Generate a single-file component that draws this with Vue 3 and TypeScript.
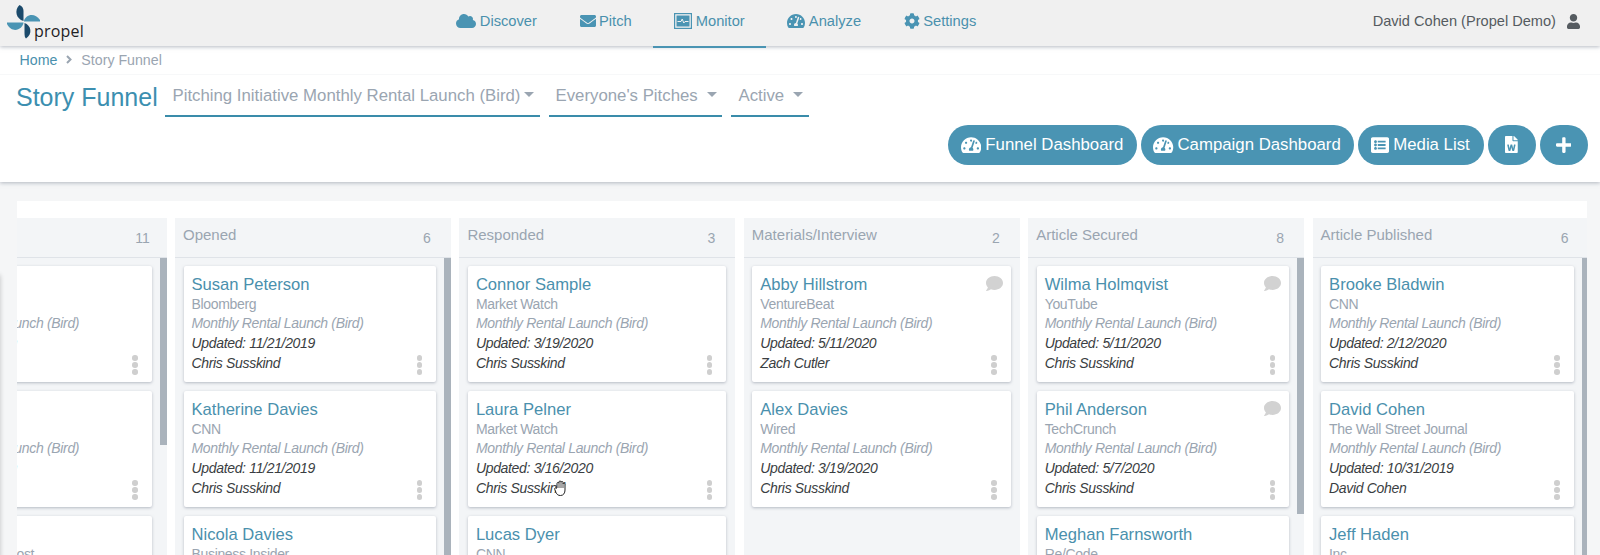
<script setup lang="ts">
interface Card { name: string; outlet: string; campaign: string; updated: string; owner: string; note?: boolean }
interface Column { title: string; count: number; thumb: 'none' | 'short' | 'mid' | 'full'; cards: Card[] }

const CAMPAIGN = 'Monthly Rental Launch (Bird)'
const card = (name: string, outlet: string, updated: string, owner = 'Chris Susskind', note = false): Card => ({
  name, outlet, campaign: CAMPAIGN, updated, owner, note,
})

const navItems = ['Discover', 'Pitch', 'Monitor', 'Analyze', 'Settings']
const paths: Record<string, { vb: string; d: string }> = {
  Discover: { vb: '0 0 640 512', d: 'M537.6 226.6c4.1-10.7 6.4-22.4 6.4-34.6 0-53-43-96-96-96-19.7 0-38.1 6-53.3 16.2C367 64.2 315.3 32 256 32c-88.4 0-160 71.6-160 160 0 2.7.1 5.4.2 8.1C40.2 219.8 0 273.2 0 336c0 79.5 64.5 144 144 144h368c70.7 0 128-57.3 128-128 0-61.9-44-113.6-102.4-125.4z' },
  Pitch: { vb: '0 0 512 512', d: 'M502.3 190.8c3.9-3.1 9.7-.2 9.7 4.7V400c0 26.5-21.5 48-48 48H48c-26.5 0-48-21.5-48-48V195.6c0-5 5.7-7.8 9.7-4.7 22.4 17.4 52.1 39.5 154.1 113.6 21.1 15.4 56.7 47.8 92.2 47.6 35.7.3 72-32.8 92.3-47.6 102-74.1 131.6-96.3 154-113.7zM256 320c23.2.4 56.6-29.2 73.4-41.4 132.7-96.3 142.8-104.7 173.4-128.7 5.8-4.5 9.2-11.5 9.2-18.9v-19c0-26.5-21.5-48-48-48H48C21.5 64 0 85.5 0 112v19c0 7.4 3.4 14.3 9.2 18.9 30.6 23.9 40.7 32.4 173.4 128.7 16.8 12.2 50.2 41.8 73.4 41.4z' },
  Analyze: { vb: '0 0 576 512', d: 'M288 32C128.94 32 0 160.94 0 320c0 52.8 14.25 102.26 39.06 144.8 5.61 9.62 16.3 15.2 27.44 15.2h443c11.14 0 21.83-5.58 27.44-15.2C561.75 422.26 576 372.8 576 320c0-159.06-128.94-288-288-288zm0 64c14.71 0 26.58 10.13 30.32 23.65-1.11 2.26-2.64 4.23-3.45 6.67l-9.22 27.67c-5.13 3.49-10.97 6.01-17.64 6.01-17.67 0-32-14.33-32-32S270.33 96 288 96zM96 384c-17.67 0-32-14.33-32-32s14.33-32 32-32 32 14.33 32 32-14.33 32-32 32zm48-160c-17.67 0-32-14.33-32-32s14.33-32 32-32 32 14.33 32 32-14.33 32-32 32zm246.77-72.41l-61.33 184C343.13 347.33 352 364.54 352 384c0 11.72-3.38 22.55-8.88 32H232.88c-5.5-9.45-8.88-20.28-8.88-32 0-33.94 26.5-61.43 59.9-63.59l61.34-184.01c4.17-12.56 17.73-19.45 30.36-15.17 12.57 4.19 19.35 17.79 15.17 30.36zm14.66 57.2l15.52-46.55c3.47-1.29 7.13-2.23 11.05-2.23 17.67 0 32 14.33 32 32s-14.33 32-32 32c-11.38-.01-20.89-6.28-26.57-15.22zM480 384c-17.67 0-32-14.33-32-32s14.33-32 32-32 32 14.33 32 32-14.33 32-32 32z' },
  Settings: { vb: '0 0 512 512', d: 'M487.4 315.7l-42.6-24.6c4.3-23.2 4.3-47 0-70.2l42.6-24.6c4.9-2.8 7.1-8.6 5.5-14-11.1-35.6-30-67.8-54.7-94.6-3.8-4.1-10-5.1-14.8-2.3L380.8 110c-17.9-15.4-38.5-27.3-60.8-35.1V25.8c0-5.6-3.9-10.5-9.4-11.7-36.7-8.2-74.3-7.8-109.2 0-5.5 1.2-9.4 6.1-9.4 11.7V75c-22.2 7.9-42.8 19.8-60.8 35.1L88.7 85.5c-4.9-2.8-11-1.9-14.8 2.3-24.7 26.7-43.6 58.9-54.7 94.6-1.7 5.4.6 11.2 5.5 14L67.3 221c-4.3 23.2-4.3 47 0 70.2l-42.6 24.6c-4.9 2.8-7.1 8.6-5.5 14 11.1 35.6 30 67.8 54.7 94.6 3.8 4.1 10 5.1 14.8 2.3l42.6-24.6c17.9 15.4 38.5 27.3 60.8 35.1v49.2c0 5.6 3.9 10.5 9.4 11.7 36.7 8.2 74.3 7.8 109.2 0 5.5-1.2 9.4-6.1 9.4-11.7v-49.2c22.2-7.9 42.8-19.8 60.8-35.1l42.6 24.6c4.9 2.8 11 1.9 14.8-2.3 24.7-26.7 43.6-58.9 54.7-94.6 1.5-5.5-.7-11.3-5.6-14.1zM256 336c-44.1 0-80-35.9-80-80s35.9-80 80-80 80 35.9 80 80-35.9 80-80 80z' },
  list: { vb: '0 0 512 512', d: 'M464 480H48c-26.51 0-48-21.49-48-48V80c0-26.51 21.49-48 48-48h416c26.51 0 48 21.49 48 48v352c0 26.51-21.49 48-48 48zM128 120c-22.091 0-40 17.909-40 40s17.909 40 40 40 40-17.909 40-40-17.909-40-40-40zm0 96c-22.091 0-40 17.909-40 40s17.909 40 40 40 40-17.909 40-40-17.909-40-40-40zm0 96c-22.091 0-40 17.909-40 40s17.909 40 40 40 40-17.909 40-40-17.909-40-40-40zm288-136v-32c0-6.627-5.373-12-12-12H204c-6.627 0-12 5.373-12 12v32c0 6.627 5.373 12 12 12h200c6.627 0 12-5.373 12-12zm0 96v-32c0-6.627-5.373-12-12-12H204c-6.627 0-12 5.373-12 12v32c0 6.627 5.373 12 12 12h200c6.627 0 12-5.373 12-12zm0 96v-32c0-6.627-5.373-12-12-12H204c-6.627 0-12 5.373-12 12v32c0 6.627 5.373 12 12 12h200c6.627 0 12-5.373 12-12z' },
  word: { vb: '0 0 384 512', d: 'M224 136V0H24C10.7 0 0 10.7 0 24v464c0 13.3 10.7 24 24 24h336c13.3 0 24-10.7 24-24V160H248c-13.2 0-24-10.8-24-24zm57.1 120H305c7.7 0 13.4 7.1 11.7 14.7l-38 168c-1.2 5.5-6.1 9.3-11.7 9.3h-38c-5.5 0-10.3-3.8-11.6-9.1-25.8-103.5-20.8-81.2-25.6-110.5h-.5c-1.1 14.3-2.4 17.4-25.6 110.5-1.3 5.3-6.1 9.1-11.6 9.1H117c-5.6 0-10.5-3.9-11.7-9.4l-37.8-168c-1.7-7.5 4-14.6 11.7-14.6h24.5c5.7 0 10.7 4 11.8 9.7 15.6 78 20.1 109.5 21 122.2 1.6-10.2 7.3-32.7 29.4-122.7 1.3-5.4 6.1-9.1 11.7-9.1h29.1c5.6 0 10.4 3.8 11.7 9.2 24 100.4 28.8 124 29.6 129.4-.2-11.2-2.6-17.8 21.6-129.2 1-5.6 5.9-9.5 11.6-9.5zM384 121.9v6.1H256V0h6.1c6.4 0 12.5 2.5 17 7l97.9 98c4.5 4.5 7 10.6 7 16.9z' },
  plus: { vb: '0 0 448 512', d: 'M416 208H272V64c0-17.67-14.33-32-32-32h-32c-17.67 0-32 14.33-32 32v144H32c-17.67 0-32 14.33-32 32v32c0 17.67 14.33 32 32 32h144v144c0 17.67 14.33 32 32 32h32c17.67 0 32-14.33 32-32V304h144c17.67 0 32-14.33 32-32v-32c0-17.67-14.33-32-32-32z' },
  user: { vb: '0 0 448 512', d: 'M224 256c70.7 0 128-57.3 128-128S294.7 0 224 0 96 57.3 96 128s57.3 128 128 128zm89.6 32h-16.7c-22.2 10.2-46.9 16-72.9 16s-50.6-5.8-72.9-16h-16.7C60.2 288 0 348.2 0 422.4V464c0 26.5 21.5 48 48 48h352c26.5 0 48-21.5 48-48v-41.6c0-74.2-60.2-134.4-134.4-134.4z' },
  comment: { vb: '0 0 512 512', d: 'M256 32C114.6 32 0 125.1 0 240c0 49.6 21.4 95 57 130.7C44.5 421.1 2.7 466 2.2 466.5c-2.2 2.3-2.8 5.7-1.5 8.7S4.8 480 8 480c66.3 0 116-31.8 140.6-51.4 32.7 12.3 69 19.4 107.4 19.4 141.4 0 256-93.1 256-208S397.4 32 256 32z' },
}

const filters = [
  { label: 'Pitching Initiative Monthly Rental Launch (Bird)', cls: 'f-one' },
  { label: "Everyone's Pitches", cls: 'f-two' },
  { label: 'Active', cls: 'f-three' },
]

const actions = [
  { label: 'Funnel Dashboard', icon: 'Analyze', cls: 'a-funnel' },
  { label: 'Campaign Dashboard', icon: 'Analyze', cls: 'a-campaign' },
  { label: 'Media List', icon: 'list', cls: 'a-media' },
  { label: '', icon: 'word', cls: 'a-round' },
  { label: '', icon: 'plus', cls: 'a-round' },
]

const columns: Column[] = [
  { title: 'Replied', count: 11, thumb: 'short', cards: [
    card('Rachel Kim', 'Reuters', '3/1/2019'),
    card('Jason Reed', 'Forbes', '3/1/2019'),
    card('Sarah Miles', 'The Washington Post', '3/1/2019'),
  ] },
  { title: 'Opened', count: 6, thumb: 'full', cards: [
    card('Susan Peterson', 'Bloomberg', '11/21/2019'),
    card('Katherine Davies', 'CNN', '11/21/2019'),
    card('Nicola Davies', 'Business Insider', '11/21/2019'),
  ] },
  { title: 'Responded', count: 3, thumb: 'none', cards: [
    card('Connor Sample', 'Market Watch', '3/19/2020'),
    card('Laura Pelner', 'Market Watch', '3/16/2020'),
    card('Lucas Dyer', 'CNN', '3/16/2020'),
  ] },
  { title: 'Materials/Interview', count: 2, thumb: 'none', cards: [
    card('Abby Hillstrom', 'VentureBeat', '5/11/2020', 'Zach Cutler', true),
    card('Alex Davies', 'Wired', '3/19/2020'),
  ] },
  { title: 'Article Secured', count: 8, thumb: 'mid', cards: [
    card('Wilma Holmqvist', 'YouTube', '5/11/2020', 'Chris Susskind', true),
    card('Phil Anderson', 'TechCrunch', '5/7/2020', 'Chris Susskind', true),
    card('Meghan Farnsworth', 'Re/Code', '5/7/2020'),
  ] },
  { title: 'Article Published', count: 6, thumb: 'full', cards: [
    card('Brooke Bladwin', 'CNN', '2/12/2020'),
    card('David Cohen', 'The Wall Street Journal', '10/31/2019', 'David Cohen'),
    card('Jeff Haden', 'Inc.', '10/31/2019'),
  ] },
]
</script>

<template>
  <div class="page">
    <header class="topbar">
      <div class="logo">
        <svg class="logo-mark" width="34" height="40" viewBox="5 3 34 40">
          <path fill="#1b4a6b" d="M22.500 21C15 19 13 10 18.500 5c2.500 1 4 3 4 6z" />
          <path fill="#4a94b3" d="M23 21c1-6 10.500-9.500 16-1v1.500H23z" />
          <path fill="#1b4a6b" d="M23.500 23c6.500 2 8.500 11 1.500 15.500-1-.5-1.500-2.500-1.500-5.500z" />
          <path fill="#4a94b3" d="M22.500 22.500c-.5 6.500-11 12-16.500 1.500v-1.500z" />
        </svg>
        <span class="logo-text">propel</span>
      </div>
      <nav class="nav">
        <a v-for="item in navItems" :key="item" class="nav-item" :class="{ active: item === 'Monitor' }">
          <svg v-if="item === 'Monitor'" class="nav-icon monitor" width="18" height="16" viewBox="0 0 18 16">
            <rect x="0.600" y="0.600" width="16.800" height="14.800" fill="none" stroke="#4a94b3" stroke-width="1.200" />
            <rect x="2.500" y="2.500" width="13" height="11" fill="#4a94b3" />
            <path d="M3.500 8.500h3.500l1.200-2.500 1.600 4 1.200-1.500h3.500" fill="none" stroke="#f0f0f0" stroke-width="1" />
          </svg>
          <svg v-else class="nav-icon" :class="'i-' + item" :viewBox="paths[item].vb" fill="#4a94b3"><path :d="paths[item].d" /></svg>
          <span>{{ item }}</span>
        </a>
      </nav>
      <div class="account">
        <span>David Cohen (Propel Demo)</span>
        <svg class="user-icon" :viewBox="paths.user.vb" fill="#555b60"><path :d="paths.user.d" /></svg>
      </div>
    </header>

    <section class="head">
      <div class="crumbs">
        <a class="crumb-home">Home</a>
        <svg class="crumb-sep" width="6" height="9" viewBox="0 0 6 9"><path d="M1 1l3.500 3.500L1 8" fill="none" stroke="#9aa5b1" stroke-width="2" /></svg>
        <span class="crumb-now">Story Funnel</span>
      </div>
      <div class="title-row">
        <h1 class="title">Story Funnel</h1>
        <div v-for="f in filters" :key="f.label" class="filter" :class="f.cls">
          <span>{{ f.label }}</span><i class="caret"></i>
        </div>
      </div>
      <div class="actions">
        <button v-for="(a, i) in actions" :key="i" class="action" :class="a.cls">
          <svg class="action-icon" :class="'ai-' + a.icon" :viewBox="paths[a.icon].vb" fill="#fff"><path :d="paths[a.icon].d" /></svg>
          <span v-if="a.label" class="action-label">{{ a.label }}</span>
        </button>
      </div>
    </section>

    <main class="stage">
      <div class="drawer-edge"></div>
      <div class="board-wrap">
        <div class="board">
          <article v-for="col in columns" :key="col.title" class="column">
            <header class="col-head">
              <span class="col-title">{{ col.title }}</span>
              <span class="col-count">{{ col.count }}</span>
            </header>
            <div class="col-body">
              <div class="col-cards" :class="{ scrolling: col.thumb !== 'none' }">
                <div v-for="c in col.cards" :key="c.name" class="card">
                  <div class="name">{{ c.name }}</div>
                  <div class="outlet">{{ c.outlet }}</div>
                  <div class="campaign">{{ c.campaign }}</div>
                  <div class="meta">Updated: {{ c.updated }}</div>
                  <div class="meta">{{ c.owner }}</div>
                  <svg v-if="c.note" class="note" :viewBox="paths.comment.vb" fill="#d2d2d2"><path :d="paths.comment.d" /></svg>
                  <div class="dots"><i></i><i></i><i></i></div>
                </div>
              </div>
              <div v-if="col.thumb !== 'none'" class="thumb" :class="'t-' + col.thumb"></div>
            </div>
          </article>
        </div>
      </div>
      <svg class="cursor" width="16" height="18" viewBox="0 0 16 18">
        <path d="M4 9V4.500c0-1.400 2-1.400 2 0V3c0-1.400 2-1.400 2 0v.500c0-1.400 2-1.400 2 0V5c0-1.400 2-1.400 2 0v6c0 3-1.500 5.500-4.500 5.500-2.500 0-3.500-1-4.500-3L1.800 10.500c-.7-1.300 1-2.300 1.800-1.200z" fill="#fff" stroke="#222" stroke-width="1" stroke-linejoin="round" />
        <path d="M6 5v4M8 4v5M10 5v4" stroke="#222" stroke-width="0.800" fill="none" />
      </svg>
    </main>
  </div>
</template>

<style>
html, body { margin: 0; padding: 0; overflow: hidden; }
</style>

<style scoped>
.page {
  width: 1600px;
  height: 555px;
  overflow: hidden;
  background: #f5f6f7;
  font-family: "Liberation Sans", Arial, sans-serif;
  position: relative;
}
.topbar {
  height: 46px;
  background: #f0f0f0;
  box-shadow: 0 1px 4px rgba(120, 130, 145, 0.55);
  display: flex;
  align-items: center;
  position: relative;
  z-index: 3;
}
.logo { width: 435px; height: 46px; padding-left: 5.500px; box-sizing: border-box; display: flex; align-items: flex-start; flex: none; }
.logo-mark { margin-top: 3px; flex: none; }
.logo-text { font-family: "Open Sans", sans-serif; font-size: 16px; color: #1f2225; margin: 19px 0 0 -5.500px; letter-spacing: 0.200px; line-height: 24px; }
.nav { display: flex; height: 48px; align-self: flex-start; }
.nav-item {
  height: 48px;
  box-sizing: border-box;
  padding: 0 21.300px 6px;
  display: flex;
  align-items: center;
  gap: 3.500px;
  font-size: 14.700px;
  color: #4a90ad;
}
.nav-item.active { box-shadow: inset 0 -2px 0 #4a94b3; }
.nav-icon { height: 16px; width: auto; flex: none; }
.account { margin-left: auto; display: flex; align-items: center; gap: 11px; padding: 0 20px 4px 0; font-size: 14.600px; color: #555b60; }
.user-icon { height: 15px; width: 13px; }

.head {
  height: 136px;
  background: #fff;
  box-shadow: 0 1px 4px rgba(120, 130, 145, 0.55);
  position: relative;
  z-index: 2;
  display: flex;
  flex-direction: column;
}
.crumbs { height: 29px; box-sizing: border-box; padding: 0 0 1px 19.500px; display: flex; align-items: center; gap: 9px; font-size: 14.200px; border-bottom: 1px solid #f7f8f9; }
.crumb-home { color: #4a90ad; }
.crumb-now { color: #9aa5b1; }
.title-row { display: flex; align-items: flex-start; padding-left: 16px; height: 42px; }
.title { margin: 7px 8px 0 0; width: 141px; font-size: 25px; font-weight: 400; line-height: 30px; color: #3c8fb0; white-space: nowrap; }
.filter {
  height: 42px;
  box-sizing: border-box;
  border-bottom: 2px solid #3a8caa;
  margin-right: 9px;
  padding: 9px 0 0 7.500px;
  font-size: 16.800px;
  line-height: 24px;
  color: #9aa5b1;
  display: flex;
  align-items: flex-start;
  white-space: nowrap;
}
.f-one { width: 375px; }
.f-two { width: 173px; padding-left: 6.500px; }
.f-three { width: 78px; }
.caret { width: 0; height: 0; border: 5px solid transparent; border-top-color: #9aa5b1; border-bottom: 0; margin: 8px 0 0 3.500px; }
.f-two .caret { margin-left: 9px; }
.f-three .caret { margin-left: 9px; }
.actions { display: flex; justify-content: flex-end; gap: 4px; padding: 8px 12.500px 0 0; }
.action {
  height: 39.500px;
  border: 0;
  padding: 0;
  border-radius: 20px;
  background: #4a94b3;
  color: #fff;
  font: 400 16.800px/1 "Liberation Sans", Arial, sans-serif;
  display: flex;
  align-items: center;
  justify-content: center;
  gap: 4px;
  white-space: nowrap;
}
.action-label { padding-top: 2px; }
.a-funnel { width: 188.500px; }
.a-campaign { width: 213px; }
.a-media { width: 126px; }
.a-round { width: 48px; }
.action-icon { height: 18px; width: auto; flex: none; }
.ai-word { height: 17px; }
.ai-plus { height: 18px; }

.stage { position: relative; height: 373px; padding: 19px 13px 0 17px; box-sizing: border-box; }
.drawer-edge { position: absolute; left: -6px; top: 93px; width: 6px; height: 400px; box-shadow: 0 0 5px rgba(0, 0, 0, 0.22); background: #eee; }
.board-wrap { background: #fff; height: 354px; overflow: hidden; padding-top: 16.500px; box-sizing: border-box; }
.board { display: flex; gap: 8.400px; margin-left: -126.400px; }
.column { width: 276px; flex: none; background: #f3f5f7; height: 338px; }
.col-head {
  height: 40px;
  box-sizing: border-box;
  border-bottom: 1px solid #dfe3e8;
  position: relative;
  padding: 8px 0 0 8px;
}
.col-title { font-size: 15px; line-height: 17px; color: #9aa5b1; display: block; }
.col-count { position: absolute; right: 14px; width: 20px; text-align: center; top: 12px; font-size: 14px; line-height: 17px; color: #9aa5b1; }
.col-body { position: relative; height: 298px; overflow: hidden; }
.col-cards { padding: 8.500px 9px 0 8.500px; display: flex; flex-direction: column; gap: 8.600px; }
.col-cards.scrolling { padding-right: 15px; }
.thumb { position: absolute; right: 0; top: 0; width: 7px; background: #aab3bc; }
.t-short { height: 187px; }
.t-mid { height: 256px; }
.t-full { height: 298px; }
.card {
  flex: none;
  height: 116.400px;
  box-sizing: border-box;
  background: #fff;
  border-radius: 2px;
  box-shadow: 0 1px 3px rgba(120, 130, 145, 0.5);
  padding: 9px 9px 0 8px;
  position: relative;
  white-space: nowrap;
  line-height: 19.700px;
}
.name { font-size: 16.600px; color: #4a90ad; }
.outlet { font-size: 14px; letter-spacing: -0.330px; color: #9aa5b1; }
.campaign { font-size: 14px; letter-spacing: -0.330px; font-style: italic; color: #9aa5b1; }
.meta { font-size: 14px; letter-spacing: -0.330px; font-style: italic; color: #3a3e42; }
.note { position: absolute; right: 8px; top: 9px; width: 17px; height: 17px; }
.dots { position: absolute; right: 14px; bottom: 7.700px; display: flex; flex-direction: column; gap: 1.400px; }
.dots i { display: block; width: 5.500px; height: 5.500px; border-radius: 50%; background: #cfcfcf; }
.cursor { position: absolute; left: 553px; top: 297px; }
</style>
